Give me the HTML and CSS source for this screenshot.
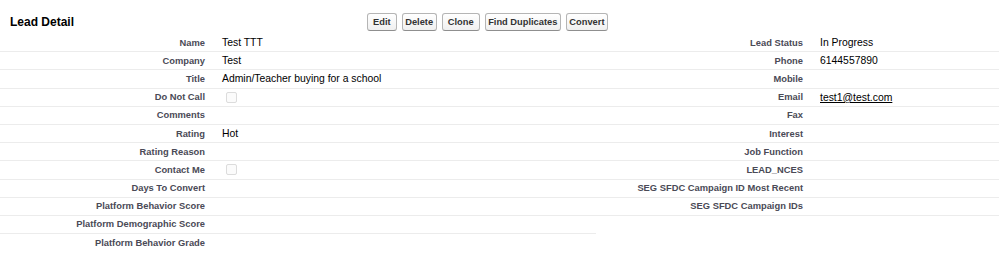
FILE: index.html
```html
<!DOCTYPE html>
<html lang="en">
<head>
    <meta charset="UTF-8">
    <title>Lead Detail</title>
    <link rel="stylesheet" href="styles.css">
</head>
<body>

<div class="detail">
    <div class="header">
        <h2 class="title">Lead Detail</h2>
        <div class="buttons">
            <button class="btn">&nbsp;Edit&nbsp;</button>
            <button class="btn">Delete</button>
            <button class="btn">&nbsp;Clone&nbsp;</button>
            <button class="btn">Find Duplicates</button>
            <button class="btn">Convert</button>
        </div>
    </div>

    <div class="list">
        <div class="label">Name</div>
        <div class="data">Test TTT</div>
        <div class="label">Lead Status</div>
        <div class="data">In Progress</div>

        <div class="label">Company</div>
        <div class="data">Test</div>
        <div class="label">Phone</div>
        <div class="data">6144557890</div>

        <div class="label">Title</div>
        <div class="data">Admin/Teacher buying for a school</div>
        <div class="label">Mobile</div>
        <div class="data"></div>

        <div class="label">Do Not Call</div>
        <div class="data"><span class="check"></span></div>
        <div class="label">Email</div>
        <div class="data"><a href="#" class="mail">test1@test.com</a></div>

        <div class="label">Comments</div>
        <div class="data"></div>
        <div class="label">Fax</div>
        <div class="data"></div>

        <div class="label">Rating</div>
        <div class="data">Hot</div>
        <div class="label">Interest</div>
        <div class="data"></div>

        <div class="label">Rating Reason</div>
        <div class="data"></div>
        <div class="label">Job Function</div>
        <div class="data"></div>

        <div class="label">Contact Me</div>
        <div class="data"><span class="check"></span></div>
        <div class="label">LEAD_NCES</div>
        <div class="data"></div>

        <div class="label">Days To Convert</div>
        <div class="data"></div>
        <div class="label">SEG SFDC Campaign ID Most Recent</div>
        <div class="data"></div>

        <div class="label">Platform Behavior Score</div>
        <div class="data"></div>
        <div class="label">SEG SFDC Campaign IDs</div>
        <div class="data"></div>

        <div class="label">Platform Demographic Score</div>
        <div class="data"></div>
        <div class="empty"></div>
        <div class="empty"></div>

        <div class="label last">Platform Behavior Grade</div>
        <div class="data last"></div>
        <div class="empty"></div>
        <div class="empty"></div>
    </div>
</div>

</body>
</html>
```

FILE: styles.css
```css
*{
    margin: 0;
    padding: 0;
    box-sizing: border-box;
    font-family: 'Liberation Sans', Arial, sans-serif;
}

body{
    background: #fff;
    color: #000;
}

.header{
    display: flex;
    align-items: center;
    height: 34px;
    padding-top: 9px;
}

.title{
    width: 367px;
    padding-left: 10px;
    font-size: 12px;
    font-weight: bold;
    color: #000;
}

.buttons{
    display: flex;
    gap: 5px;
}

.btn{
    height: 18px;
    padding: 0 2.5px;
    font-size: 9.3px;
    font-weight: bold;
    color: #333;
    background: linear-gradient(#ffffff, #f0f0f0);
    border: 1px solid #b5b5b5;
    border-bottom-color: #8f8f8f;
    border-radius: 3px;
    cursor: pointer;
}

.list{
    display: grid;
    grid-template-columns: 215px 381px 217px 186px;
    grid-auto-rows: 18.2px;
}

.label, .data{
    display: flex;
    align-items: center;
    border-bottom: 1px solid #ececec;
}

.label{
    justify-content: flex-end;
    padding-right: 10px;
    font-size: 9.35px;
    font-weight: bold;
    color: #4a4a56;
    white-space: nowrap;
}

.data{
    padding-left: 7px;
    font-size: 10.4px;
    color: #000;
}

.last{
    border-bottom: 0;
}

.mail{
    color: #000;
    text-decoration: underline;
}

.check{
    display: block;
    width: 11px;
    height: 11px;
    margin-left: 4px;
    border: 1px solid #dcdcdc;
    border-radius: 2px;
    background: #fbfbfb;
}
```
